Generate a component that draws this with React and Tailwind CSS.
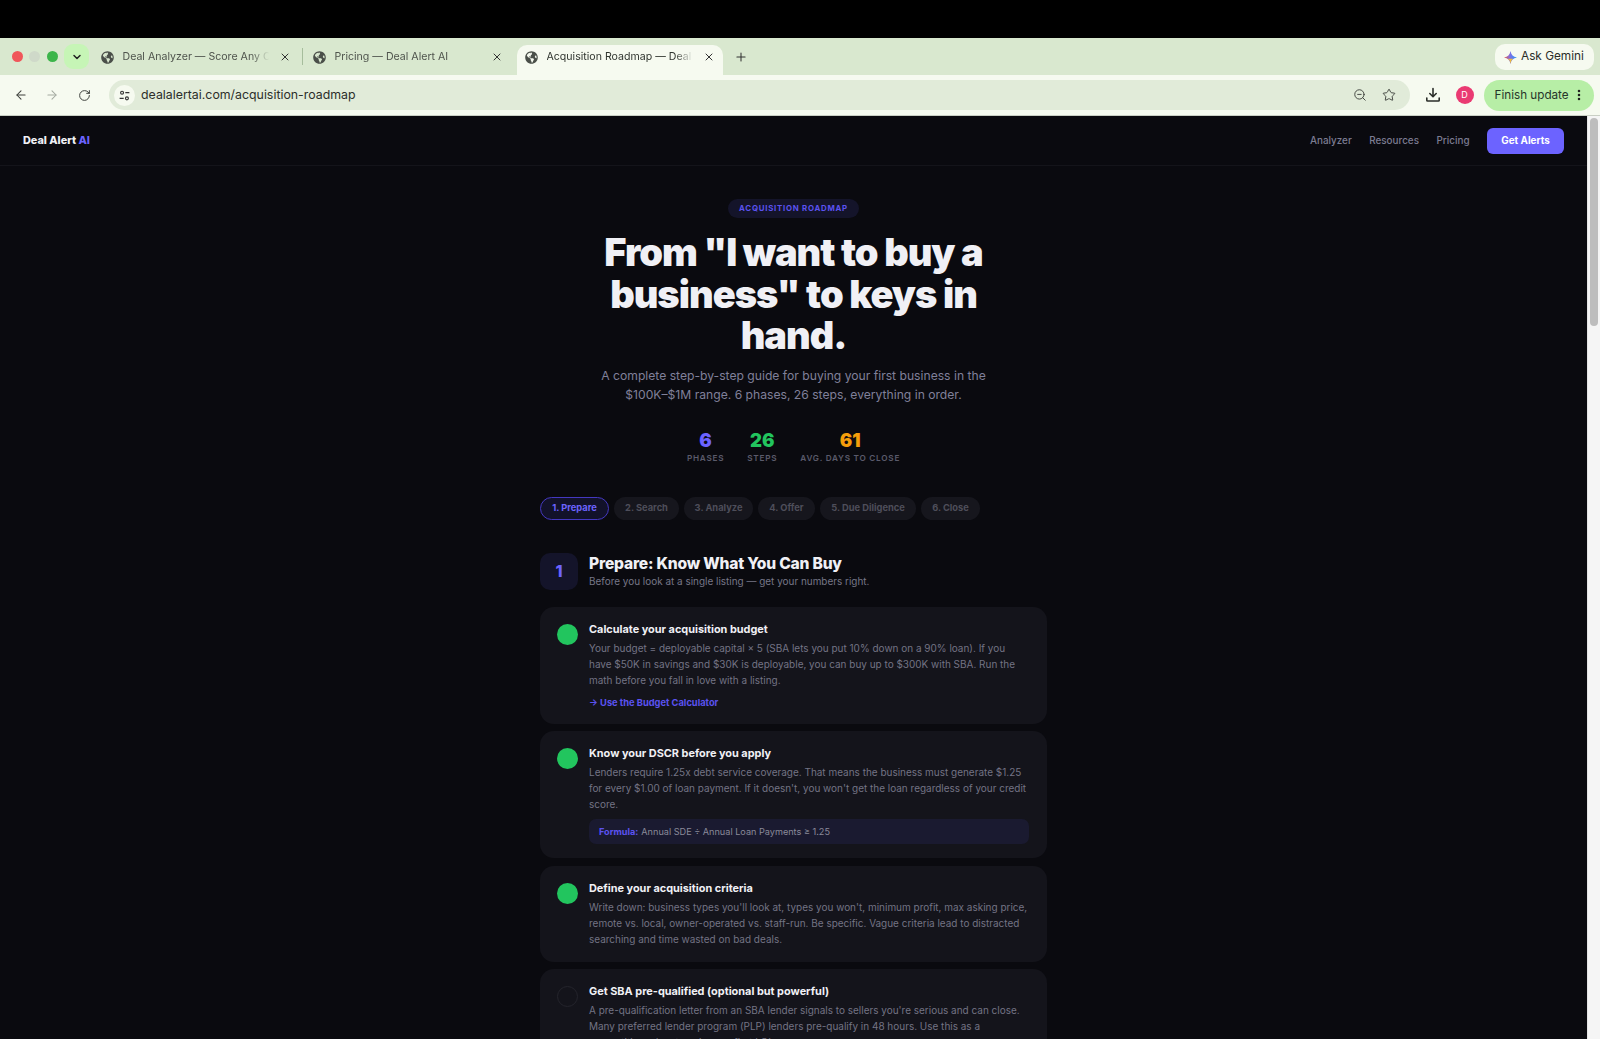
import React from "react";
import { ArrowLeft, ArrowRight, RotateCw, ZoomOut, Star, EllipsisVertical, Plus, X, ChevronDown } from "lucide-react";
import { FaGlobeAmericas } from "react-icons/fa";

const Tab = ({ title, active, sep }) => (
  <div className={`relative mt-[7px] flex h-[30px] items-center pb-[6px] ${active ? "w-[206px] rounded-t-[10px] bg-[#f6faf0] pl-[8px] pr-[8px]" : "w-[212px] pl-[8px] pr-[14px]"}`}>
    <FaGlobeAmericas className="h-[13px] w-[13px] shrink-0 text-[#4a4f49]" />
    <span className={`ml-[9px] w-[146px] overflow-hidden whitespace-nowrap text-[10.6px] leading-[14px] [mask-image:linear-gradient(to_right,black_88%,transparent)] ${active ? "text-[#30352f]" : "text-[#4f544d]"}`}>{title}</span>
    <X className="ml-auto h-[12px] w-[12px] shrink-0 text-[#333]" strokeWidth={2} />
    {sep && <div className="absolute right-[2px] top-[3px] h-[17px] w-px bg-[#a6bd9c]" />}
  </div>
);

const Step = ({ done, title, children, extra, tight }) => (
  <div className={`flex rounded-[14px] bg-[#14141b] pl-[17px] pr-[18px] pt-[13px] ${tight ? "pb-[14px]" : "pb-[15px]"}`}>
    <div className={`mt-[4px] h-[21px] w-[21px] shrink-0 rounded-full ${done ? "bg-[#22c55e]" : "border border-[#24242c]"}`} />
    <div className="ml-[11px] min-w-0 flex-1">
      <div className="text-[10.9px] font-bold leading-[18px] text-[#f0f0f5]">{title}</div>
      <p className="mt-[2px] text-[9.97px] leading-[16px] text-[#737384]">{children}</p>
      {extra}
    </div>
  </div>
);

const Stat = ({ n, label, color }) => (
  <div className="flex flex-col items-center">
    <div className={`text-[18.5px] font-black leading-[24px] ${color}`}>{n}</div>
    <div className="text-[8.2px] font-semibold uppercase leading-[12px] tracking-[0.75px] text-[#5b5b6b]">{label}</div>
  </div>
);

export default function App() {
  const tabs = ["2. Search", "3. Analyze", "4. Offer", "5. Due Diligence", "6. Close"];
  const widths = ["w-[65px]", "w-[69px]", "w-[57px]", "w-[96px]", "w-[59px]"];
  return (
    <div className="flex h-[1039px] flex-col overflow-hidden bg-black font-['Inter',sans-serif]">
      <div className="h-[38px] shrink-0 bg-black" />

      <div className="flex h-[37px] shrink-0 items-start bg-[#d9e8cf]">
        <div className="ml-[11.5px] mt-[12.5px] flex items-center gap-[6.5px]">
          <span className="h-[11px] w-[11px] rounded-full bg-[#f0565a]" />
          <span className="h-[11px] w-[11px] rounded-full bg-[#cfd9c9]" />
          <span className="h-[11px] w-[11px] rounded-full bg-[#3cb54a]" />
        </div>
        <div className="ml-[6.5px] mt-[6px] flex h-[25px] w-[25px] items-center justify-center rounded-[9px] bg-[#c6f5b6]">
          <ChevronDown className="h-[12px] w-[12px] text-[#222]" strokeWidth={3} />
        </div>
        <div className="ml-[3.5px] flex">
          <Tab title="Deal Analyzer — Score Any O" sep />
          <Tab title="Pricing — Deal Alert AI" />
          <Tab title="Acquisition Roadmap — Deal" active />
        </div>
        <Plus className="ml-[11px] mt-[12px] h-[14px] w-[14px] text-[#333]" strokeWidth={1.8} />
        <div className="ml-auto mr-[6px] mt-[6px] flex h-[26px] w-[99px] items-center rounded-[10px] bg-[#f6faf0] pl-[9px]">
          <svg viewBox="0 0 24 24" className="h-[13px] w-[13px] shrink-0">
            <defs>
              <linearGradient id="g" x1="0" y1="0.5" x2="1" y2="0.5">
                <stop offset="0" stopColor="#ef5a3c" />
                <stop offset="0.45" stopColor="#7d6ee6" />
                <stop offset="1" stopColor="#2a9bf5" />
              </linearGradient>
            </defs>
            <path d="M12 0C13 7 17 11 24 12C17 13 13 17 12 24C11 17 7 13 0 12C7 11 11 7 12 0Z" fill="url(#g)" />
            <path d="M12 24C11.4 19 9.6 16 7 14.5H17C14.4 16 12.6 19 12 24Z" fill="#f3bd3a" />
          </svg>
          <span className="mb-[1px] ml-[4px] whitespace-nowrap text-[11.8px] text-[#2a2d29]">Ask Gemini</span>
        </div>
      </div>

      <div className="flex h-[41px] shrink-0 items-center border-b border-[#c9cfc4] bg-[#f6faf0]">
        <ArrowLeft className="ml-[13.5px] h-[14px] w-[14px] text-[#3c3f3b]" strokeWidth={1.8} />
        <ArrowRight className="ml-[17.5px] h-[14px] w-[14px] text-[#a3a9a0]" strokeWidth={1.8} />
        <RotateCw className="ml-[19px] h-[13px] w-[13px] text-[#3c3f3b]" strokeWidth={1.8} />
        <div className="ml-[17.5px] flex h-[30px] w-[1301px] items-center rounded-full bg-[#e1ebd9] pl-[5px] pr-[14px]">
          <div className="flex h-[21px] w-[21px] items-center justify-center rounded-full bg-[#f6faf0]">
            <svg viewBox="0 0 16 16" className="h-[13px] w-[13px]" fill="none" stroke="#333" strokeWidth="1.4">
              <circle cx="5" cy="4.5" r="1.8" />
              <path d="M9 4.5h5M2 11.5h5" />
              <circle cx="11" cy="11.5" r="1.8" />
            </svg>
          </div>
          <span className="ml-[6.5px] mt-[1px] text-[12.35px] text-[#2b2e2a]">dealalertai.com/acquisition-roadmap</span>
          <ZoomOut className="ml-auto h-[14px] w-[14px] text-[#3c3f3b]" strokeWidth={1.6} />
          <Star className="ml-[15px] h-[14px] w-[14px] text-[#3c3f3b]" strokeWidth={1.6} />
        </div>
        <svg viewBox="0 0 16 16" className="ml-[15px] h-[16px] w-[16px]" fill="none" stroke="#2b2e2a" strokeWidth="1.6" strokeLinecap="round" strokeLinejoin="round">
          <path d="M8 1.5v8M4.8 6.5 8 9.7l3.2-3.2" />
          <path d="M1.8 11v2.2a.8.8 0 0 0 .8.8h10.8a.8.8 0 0 0 .8-.8V11" />
        </svg>
        <div className="ml-[15px] flex h-[18px] w-[18px] items-center justify-center rounded-full bg-[#ea3a72] text-[9px] text-white">D</div>
        <div className="ml-[10px] flex h-[31px] w-[110px] items-center rounded-full bg-[#b7eea6] pl-[11px]">
          <span className="mt-[1px] whitespace-nowrap text-[11.7px] text-[#26352a]">Finish update</span>
          <EllipsisVertical className="ml-[3px] h-[14px] w-[14px] text-[#222]" strokeWidth={2.4} />
        </div>
      </div>

      <div className="flex min-h-0 flex-1 bg-[#0a0a0f]">
        <div className="min-w-0 flex-1 overflow-hidden">
          <nav className="flex h-[50px] items-center border-b border-[#14141a] pl-[23px] pr-[23px]">
            <div className="text-[10.85px] font-extrabold text-[#f0f0f5]">Deal Alert <span className="text-[#6c63ff]">AI</span></div>
            <div className="ml-auto flex items-center text-[9.9px] font-medium text-[#7c7c92]">
              <span>Analyzer</span>
              <span className="ml-[17.5px]">Resources</span>
              <span className="ml-[17.5px]">Pricing</span>
              <span className="ml-[17.5px] flex h-[26px] w-[77px] items-center justify-center rounded-[6px] bg-[#6c63ff] font-bold text-white">Get Alerts</span>
            </div>
          </nav>

          <main className="mx-auto flex w-[507px] flex-col">
            <div className="mt-[33px] flex justify-center">
              <span className="flex h-[19px] w-[131px] items-center justify-center rounded-full bg-[#14142a] text-[7.85px] font-bold tracking-[0.75px] text-[#5b52f0]">ACQUISITION ROADMAP</span>
            </div>
            <h1 className="mx-auto mt-[14px] w-[400px] text-center text-[38px] font-black leading-[41.5px] tracking-[-1px] text-[#f0f0f5]">From "I want to buy a business" to keys in hand.</h1>
            <p className="mx-auto mt-[9px] w-[400px] text-center text-[12.15px] leading-[19.7px] text-[#80809a]">A complete step-by-step guide for buying your first business in the $100K–$1M range. 6 phases, 26 steps, everything in order.</p>
            <div className="mt-[23px] flex justify-center gap-[23px]">
              <Stat n="6" label="Phases" color="text-[#6c63ff]" />
              <Stat n="26" label="Steps" color="text-[#22c55e]" />
              <Stat n="61" label="Avg. days to close" color="text-[#f59e0b]" />
            </div>
            <div className="mt-[33px] flex gap-[5px]">
              <span className="flex h-[23px] w-[69px] items-center justify-center rounded-full border border-[#4438c0] bg-[#12122a] text-[9.3px] font-bold text-[#6c63ff]">1. Prepare</span>
              {tabs.map((t, i) => (
                <span key={t} className={`flex h-[23px] items-center justify-center rounded-full bg-[#16161d] text-[9.3px] font-bold text-[#4e4e5a] ${widths[i]}`}>{t}</span>
              ))}
            </div>

            <div className="mt-[33px] flex items-center">
              <div className="flex h-[37px] w-[38px] items-center justify-center rounded-[10px] bg-[#14142a] text-[16px] font-extrabold text-[#6c63ff]">1</div>
              <div className="ml-[11px]">
                <div className="text-[15.6px] font-extrabold leading-[18px] tracking-[-0.2px] text-[#f0f0f5]">Prepare: Know What You Can Buy</div>
                <div className="mt-[1px] text-[9.95px] leading-[14px] text-[#777788]">Before you look at a single listing — get your numbers right.</div>
              </div>
            </div>

            <div className="mt-[17px] flex flex-col gap-[7.5px]">
              <Step
                done
                tight
                title="Calculate your acquisition budget"
                extra={<div className="mt-[8px] text-[9.3px] font-bold leading-[14px] text-[#5b52f0]">→ Use the Budget Calculator</div>}
              >
                Your budget = deployable capital × 5 (SBA lets you put 10% down on a 90% loan). If you have $50K in savings and $30K is deployable, you can buy up to $300K with SBA. Run the math before you fall in love with a listing.
              </Step>
              <Step
                done
                tight
                title="Know your DSCR before you apply"
                extra={
                  <div className="mt-[7px] flex h-[25px] items-center rounded-[7px] bg-[#1a1a30] pl-[10px] text-[9.15px]">
                    <span className="font-bold text-[#5b52f0]">Formula:</span>
                    <span className="ml-[3px] text-[#8a8a9a]">Annual SDE ÷ Annual Loan Payments ≥ 1.25</span>
                  </div>
                }
              >
                Lenders require 1.25x debt service coverage. That means the business must generate $1.25 for every $1.00 of loan payment. If it doesn't, you won't get the loan regardless of your credit score.
              </Step>
              <Step done title="Define your acquisition criteria">
                Write down: business types you'll look at, types you won't, minimum profit, max asking price, remote vs. local, owner-operated vs. staff-run. Be specific. Vague criteria lead to distracted searching and time wasted on bad deals.
              </Step>
              <Step title="Get SBA pre-qualified (optional but powerful)">
                A pre-qualification letter from an SBA lender signals to sellers you're serious and can close. Many preferred lender program (PLP) lenders pre-qualify in 48 hours. Use this as a competitive advantage in your first LOI.
              </Step>
            </div>
          </main>
        </div>
        <div className="flex w-[13px] shrink-0 justify-center border-l border-[#e5e5e5] bg-[#f5f5f5] pt-[2px]">
          <div className="h-[208px] w-[8px] rounded-full bg-[#bdbdbd]" />
        </div>
      </div>
    </div>
  );
}
